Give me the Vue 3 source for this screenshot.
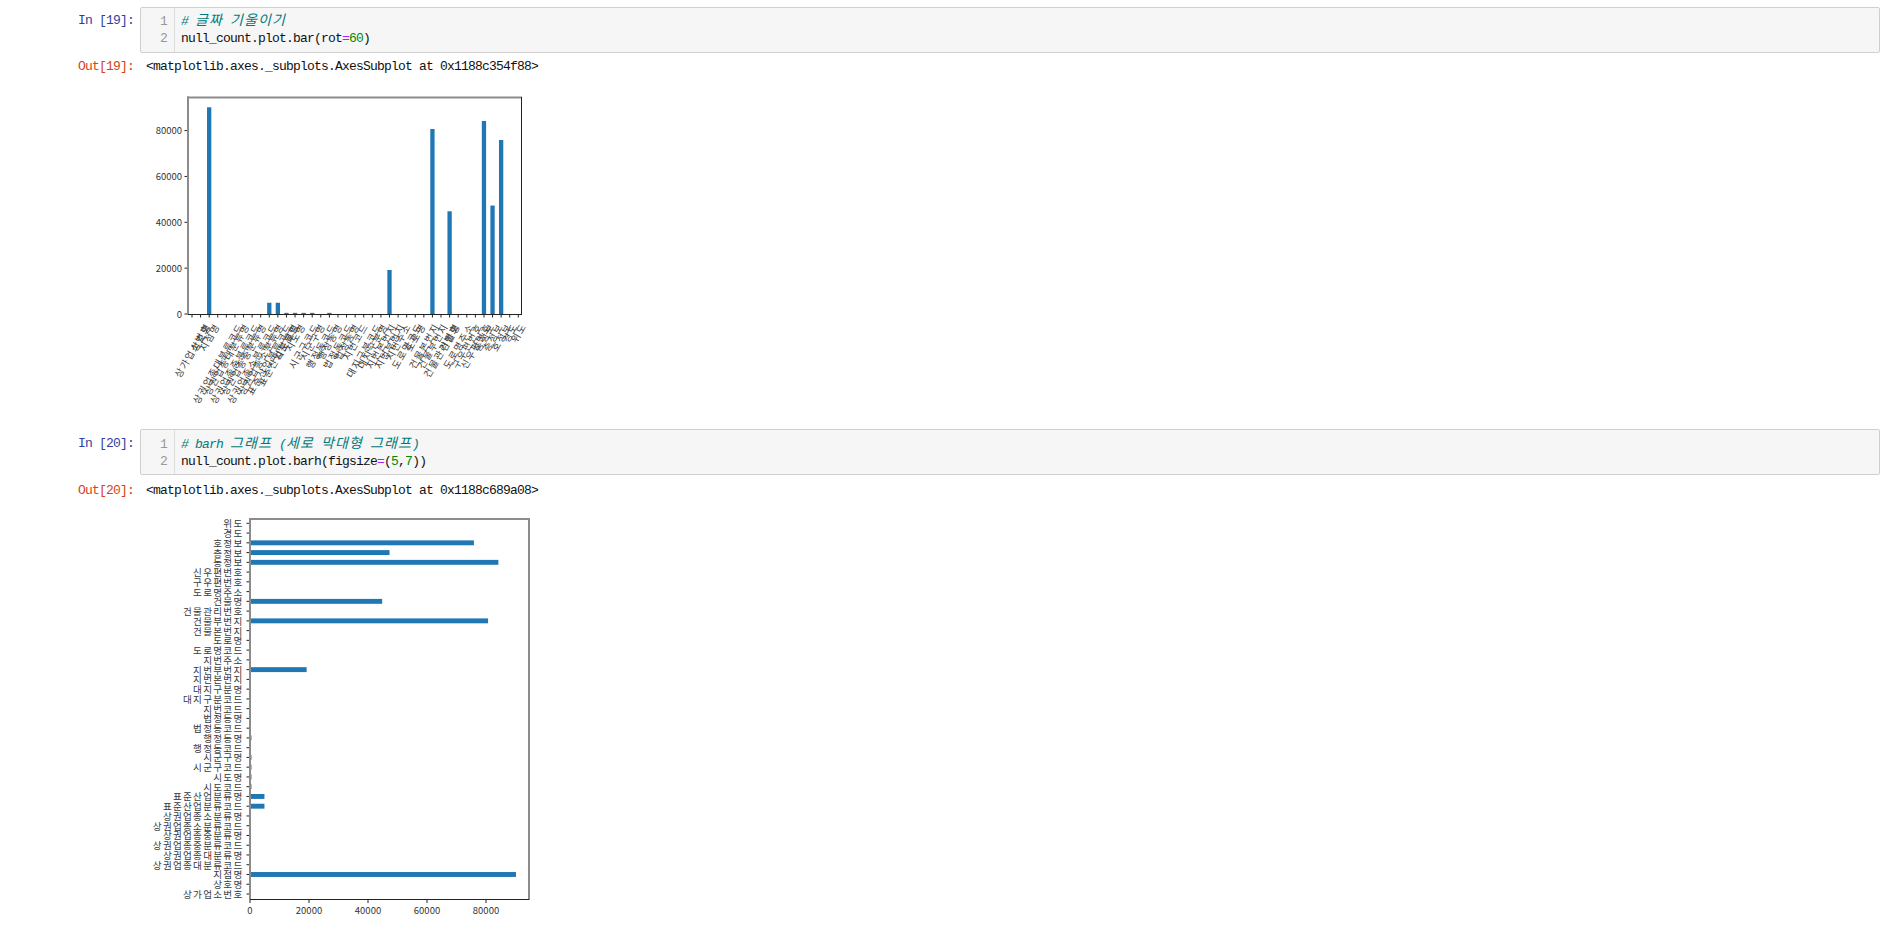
<script setup>
const names = ['상가업소번호','상호명','지점명','상권업종대분류코드','상권업종대분류명','상권업종중분류코드','상권업종중분류명','상권업종소분류코드','상권업종소분류명','표준산업분류코드','표준산업분류명','시도코드','시도명','시군구코드','시군구명','행정동코드','행정동명','법정동코드','법정동명','지번코드','대지구분코드','대지구분명','지번본번지','지번부번지','지번주소','도로명코드','도로명','건물본번지','건물부번지','건물관리번호','건물명','도로명주소','구우편번호','신우편번호','동정보','층정보','호정보','경도','위도']
const counts = { 2: 90164, 9: 4900, 10: 4900, 11: 500, 12: 500, 13: 500, 14: 500, 16: 500, 23: 19200, 28: 80700, 30: 44800, 34: 84200, 35: 47300, 36: 75900 }
const val = (i) => counts[i] || 0

const ADV = 10.1
const vItems = names.map((n, i) => {
  const x = 192 + i * 8.587
  const L = n.length * ADV
  const cy = 321 + (L * Math.sin(Math.PI / 3) + 6) / 2
  return { n, i, x, cy, h: val(i) * 0.0022925 }
})
const hItems = names.map((n, i) => ({ n, i, y: 894 - i * 9.755, w: val(i) * 0.00295 }))
const vTicks = [0, 20000, 40000, 60000, 80000].map((v) => ({ v, y: 314 - v * 0.0022925 }))
const hTicks = [0, 20000, 40000, 60000, 80000].map((v) => ({ v, x: 250 + v * 0.00295 }))
</script>

<template>
  <div class="notebook">
    <section class="cell">
      <div class="row">
        <div class="prompt in">In [19]:</div>
        <div class="input">
          <div class="gutter"><div>1</div><div>2</div></div>
          <div class="code">
            <div class="line comment"># <span class="ko">글짜</span> <span class="ko">기울이기</span></div>
            <div class="line">null_count.plot.bar(rot<span class="op">=</span><span class="num">60</span>)</div>
          </div>
        </div>
      </div>
      <div class="row out-row">
        <div class="prompt out">Out[19]:</div>
        <div class="repr">&lt;matplotlib.axes._subplots.AxesSubplot at 0x1188c354f88&gt;</div>
      </div>
      <svg class="plot" width="400" height="330" viewBox="150 85 400 330">
        <g v-for="t in vTicks" :key="t.v">
          <line :x1="184.5" :x2="188" :y1="t.y" :y2="t.y" class="tick" />
          <text :x="182" :y="t.y + 3.5" text-anchor="end" class="num-label">{{ t.v }}</text>
        </g>
        <g v-for="b in vItems" :key="b.i">
          <rect v-if="b.h" :x="b.x - 2.15" :y="314 - b.h" width="4.3" :height="b.h" class="bar" />
          <line :x1="b.x" :x2="b.x" y1="314" y2="317.5" class="tick" />
          <text class="ko-label" text-anchor="middle" dominant-baseline="central" :transform="`translate(${b.x} ${b.cy}) rotate(-60)`">{{ b.n }}</text>
        </g>
        <rect x="187" y="96.5" width="2" height="218" class="spine-soft" />
        <rect x="187" y="96.5" width="335" height="2" class="spine-soft" />
        <line x1="521.5" x2="521.5" y1="97" y2="314.5" class="spine" />
        <line x1="188" x2="522" y1="314.5" y2="314.5" class="spine" />
      </svg>
    </section>

    <section class="cell second">
      <div class="row">
        <div class="prompt in">In [20]:</div>
        <div class="input">
          <div class="gutter"><div>1</div><div>2</div></div>
          <div class="code">
            <div class="line comment"># barh <span class="ko">그래프</span> (<span class="ko">세로</span> <span class="ko">막대형</span> <span class="ko">그래프</span>)</div>
            <div class="line">null_count.plot.barh(figsize<span class="op">=</span>(<span class="num">5</span>,<span class="num">7</span>))</div>
          </div>
        </div>
      </div>
      <div class="row out-row">
        <div class="prompt out">Out[20]:</div>
        <div class="repr">&lt;matplotlib.axes._subplots.AxesSubplot at 0x1188c689a08&gt;</div>
      </div>
      <svg class="plot" width="400" height="426" viewBox="150 505 400 426">
        <g v-for="b in hItems" :key="b.i">
          <rect v-if="b.w" x="250" :y="b.y - 2.45" :width="b.w" height="4.9" class="bar" />
          <line x1="246.5" x2="250" :y1="b.y" :y2="b.y" class="tick" />
          <text :x="243.5" :y="b.y" text-anchor="end" dominant-baseline="central" class="ko-label">{{ b.n }}</text>
        </g>
        <g v-for="t in hTicks" :key="t.v">
          <line :x1="t.x" :x2="t.x" y1="899.5" y2="903" class="tick" />
          <text :x="t.x" y="914" text-anchor="middle" class="num-label">{{ t.v }}</text>
        </g>
        <rect x="249" y="518" width="2" height="382" class="spine-soft" />
        <rect x="249" y="518" width="281" height="2" class="spine-soft" />
        <rect x="528" y="518" width="2" height="382" class="spine-soft" />
        <line x1="250" x2="529" y1="899.5" y2="899.5" class="spine" />
      </svg>
    </section>
  </div>
</template>

<style>
html, body { margin: 0; background: #fff; overflow: hidden; }
</style>

<style scoped>
.notebook {
  padding-top: 7px;
  font-family: "Liberation Mono", "Noto Sans CJK KR", monospace;
  font-size: 13px;
  letter-spacing: -0.8px;
  color: #111;
}
.cell { margin-bottom: 14px; }
.row { display: flex; padding-right: 21px; }
.prompt {
  width: 134px;
  text-align: right;
  line-height: 17px;
  padding-top: 5px;
  margin-right: 6px;
  flex: none;
}
.in { color: #303f9f; }
.out { color: #d84315; padding-top: 0; }
.input {
  flex: 1;
  display: flex;
  height: 46px;
  box-sizing: border-box;
  border: 1px solid #cfcfcf;
  border-radius: 2px;
  background: #f6f6f6;
}
.gutter {
  width: 34px;
  flex: none;
  box-sizing: border-box;
  border-right: 1px solid #ddd;
  padding: 5px 7px 0 0;
  color: #999;
  text-align: right;
  line-height: 17px;
}
.code { padding: 5px 0 0 6px; white-space: pre; }
.line { height: 17px; line-height: 17px; overflow: visible; }
.comment { font-style: italic; color: #007a7a; }
.ko {
  font-family: "Noto Sans CJK KR", sans-serif;
  font-size: 14px;
  letter-spacing: 1.12px;
  line-height: 1px;
}
.op { color: #a2f; }
.num { color: #080; }
.out-row { margin-top: 5px; }
.second .prompt.in { padding-top: 6px; }
.second .gutter, .second .code { padding-top: 6px; }
.second .out-row { margin-top: 7px; }
.repr { line-height: 17px; white-space: pre; padding-left: 6px; }
.plot { display: block; margin: 10px 0 0 150px; }
.second .plot { margin-top: 6px; }
.bar { fill: #1f77b4; }
.tick { stroke: #222; stroke-width: 1; }
.spine { stroke: #222; stroke-width: 1; }
.spine-soft { fill: #8c8c8c; }
.ko-label { font-family: "Noto Sans CJK KR", sans-serif; font-size: 9.6px; letter-spacing: 1.25px; fill: #3a3a3a; }
.num-label { font-family: "Noto Sans CJK KR", sans-serif; font-size: 9.5px; fill: #333; letter-spacing: 0; }
</style>
